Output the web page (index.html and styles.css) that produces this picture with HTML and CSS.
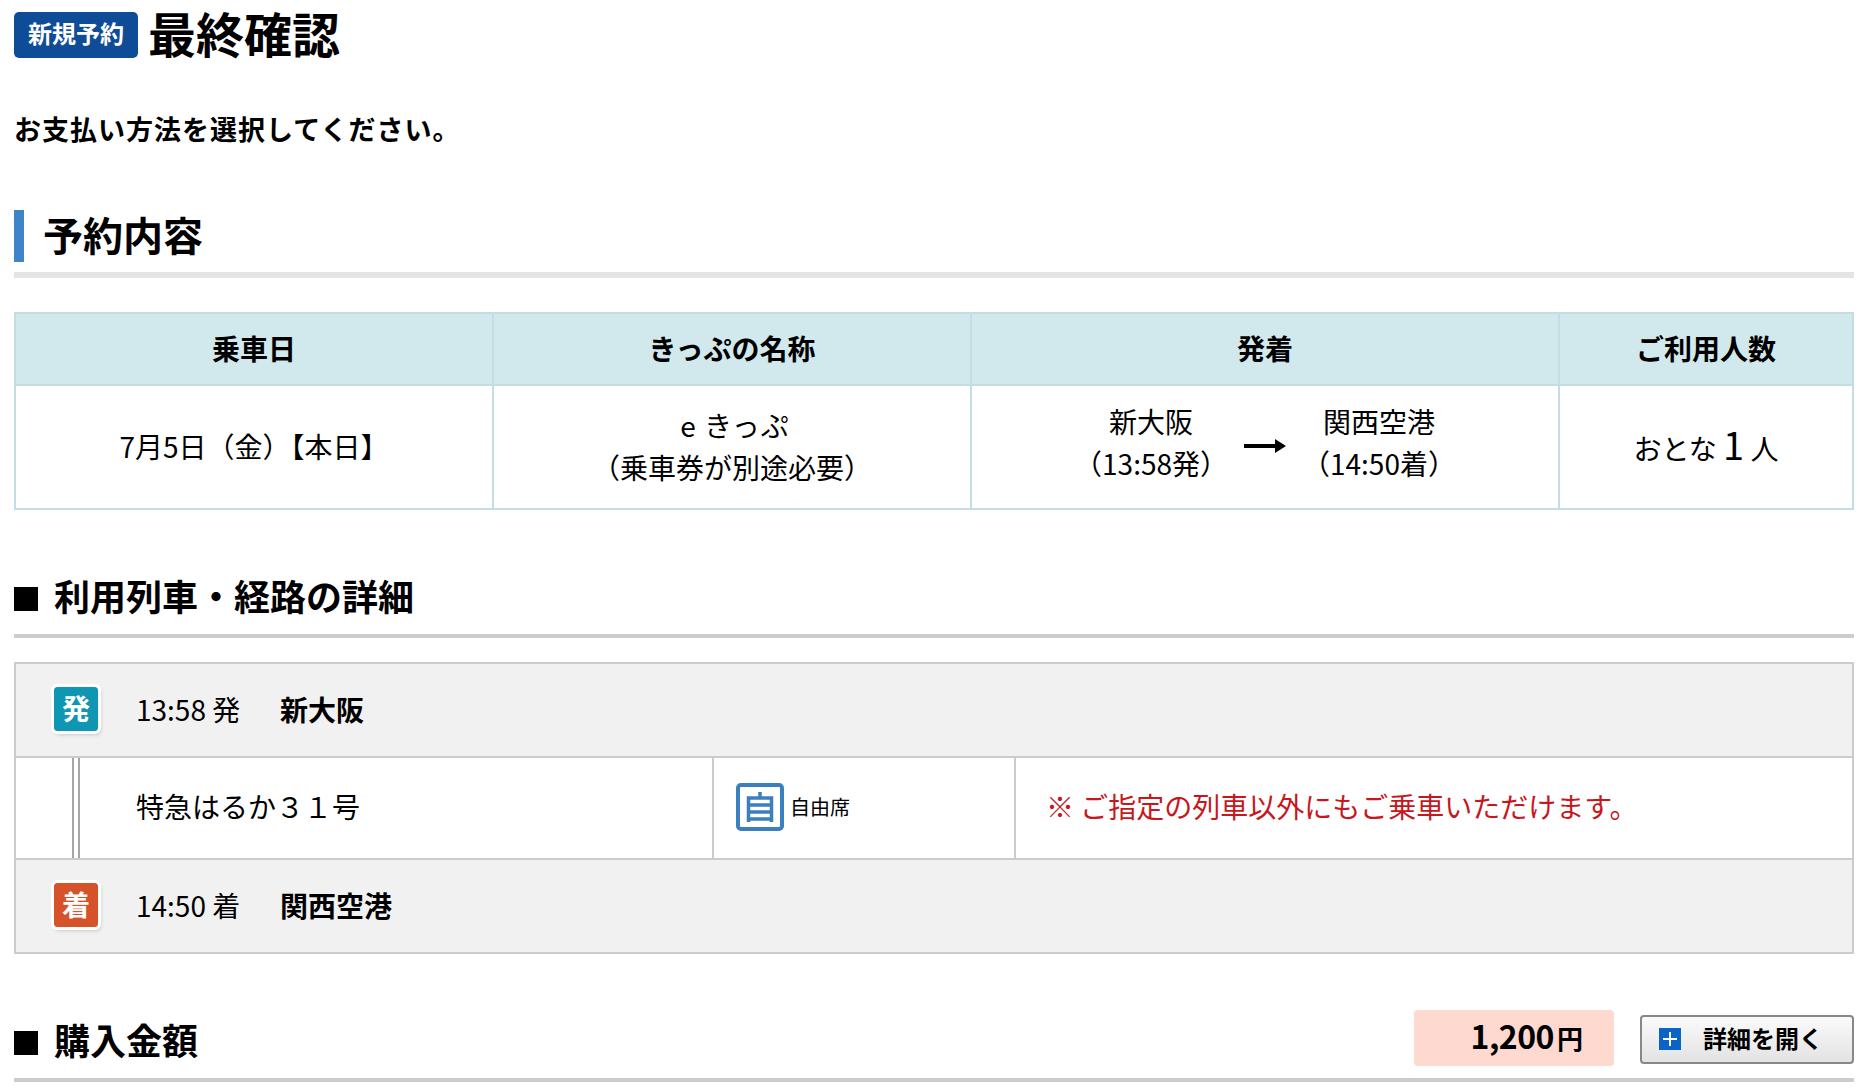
FILE: index.html
```html
<!DOCTYPE html>
<html lang="ja">
  <head>
    <meta charset="UTF-8" />
    <meta name="viewport" content="width=device-width, initial-scale=1.0" />
    <title>最終確認</title>
    <link rel="stylesheet" href="styles.css">
  </head>
  <body>
    <div class="page-title">
      <span class="badge">新規予約</span>
      <h1>最終確認</h1>
    </div>
    <p class="lead">お支払い方法を選択してください。</p>

    <h2 class="section-main">予約内容</h2>
    <table class="summary">
      <tr>
        <th class="col-date">乗車日</th>
        <th class="col-name">きっぷの名称</th>
        <th class="col-route">発着</th>
        <th>ご利用人数</th>
      </tr>
      <tr>
        <td>7月5日（金）【本日】</td>
        <td><span class="ticket-name">e きっぷ</span><br />（乗車券が別途必要）</td>
        <td>
          <div class="route">
            <div class="stop">新大阪<br />（13:58発）</div>
            <svg class="route-arrow" width="42" height="16" viewBox="0 0 42 16">
              <path d="M0 6h31V1l11 7-11 7v-5H0z" fill="#000" />
            </svg>
            <div class="stop">関西空港<br />（14:50着）</div>
          </div>
        </td>
        <td>おとな <span class="count">1</span> 人</td>
      </tr>
    </table>

    <h2 class="section-sub">利用列車・経路の詳細</h2>
    <div class="train-box">
      <div class="stop-row">
        <span class="mark mark-dep">発</span>
        <span class="time">13:58 発</span>
        <strong>新大阪</strong>
      </div>
      <div class="train-row">
        <div class="train-name">特急はるか３１号</div>
        <div class="seat">
          <svg width="48" height="48" viewBox="0 0 48 48">
            <rect x="2" y="2" width="44" height="44" rx="3" fill="#fff" stroke="#3b7fc0" stroke-width="4" />
            <path d="M24 9v6M12.500 15h23v21h-23zM12.500 22h23M12.500 29h23M12.500 36v3M35.500 36v3" fill="none" stroke="#3b7fc0" stroke-width="3.500" />
          </svg>
          <span>自由席</span>
        </div>
        <div class="train-note">※ ご指定の列車以外にもご乗車いただけます。</div>
      </div>
      <div class="stop-row">
        <span class="mark mark-arr">着</span>
        <span class="time">14:50 着</span>
        <strong>関西空港</strong>
      </div>
    </div>

    <div class="price-head">
      <h2 class="price-title">購入金額</h2>
      <div class="price"><b>1,200</b><span>円</span></div>
      <button class="detail-btn"><i class="plus"></i><span>詳細を開く</span></button>
    </div>
  </body>
</html>
```

FILE: styles.css
```css
* {
  margin: 0;
  padding: 0;
  box-sizing: border-box;
}

body {
  font-family: "Noto Sans CJK JP", sans-serif;
  padding: 0 12px 0 14px;
  background: #fff;
  color: #000;
}

.page-title {
  display: flex;
  align-items: center;
  height: 70px;
}

.badge {
  width: 124px;
  height: 46px;
  margin-right: 10px;
  background: #0f4c97;
  color: #fff;
  border-radius: 5px;
  font-size: 24px;
  font-weight: bold;
  line-height: 42px;
  text-align: center;
}

h1 {
  font-size: 48px;
  font-weight: bold;
  line-height: 66px;
  margin-bottom: 6px;
}

.lead {
  margin-top: 41px;
  font-size: 27px;
  font-weight: bold;
  line-height: 36px;
  letter-spacing: 1px;
}

.section-main {
  margin-top: 63px;
  padding: 0 0 10px 0;
  border-bottom: 6px solid #e4e4e4;
  font-size: 40px;
  line-height: 48px;
}

.section-main::before {
  content: "";
  display: inline-block;
  width: 10px;
  height: 52px;
  margin-right: 19px;
  vertical-align: top;
  background: #3f83c8;
}

.summary {
  width: 100%;
  margin-top: 34px;
  border-collapse: collapse;
  table-layout: fixed;
  font-size: 28px;
}

.summary th,
.summary td {
  border: 2px solid #c3dde3;
  text-align: center;
  font-weight: normal;
}

.summary th {
  height: 72px;
  padding-bottom: 2px;
  background: #d1e8ed;
  font-weight: bold;
}

.summary td {
  height: 124px;
  line-height: 42px;
  padding-bottom: 2px;
}

.col-date,
.col-name {
  width: 478px;
}

.col-route {
  width: 588px;
}

.ticket-name {
  margin-left: 6px;
  letter-spacing: 1px;
}

.route {
  display: flex;
  align-items: center;
  justify-content: center;
  gap: 16px;
  padding-bottom: 8px;
}

.route-arrow {
  margin-top: 8px;
}

.count {
  font-size: 38px;
}

.section-sub {
  margin-top: 60px;
  padding-bottom: 14px;
  border-bottom: 4px solid #ccc;
  font-size: 36px;
  line-height: 50px;
}

.section-sub::before,
.price-title::before {
  content: "";
  display: inline-block;
  width: 24px;
  height: 24px;
  margin-right: 16px;
  background: #000;
}

.train-box {
  margin-top: 24px;
  border: 2px solid #ccc;
  font-size: 28px;
}

.stop-row {
  display: flex;
  align-items: center;
  height: 92px;
  padding-left: 38px;
  padding-bottom: 2px;
  background: #f1f1f1;
}

.mark {
  width: 44px;
  height: 44px;
  margin-right: 38px;
  border-radius: 3px;
  outline: 3px solid #fff;
  box-shadow: 2px 3px 4px rgba(0, 0, 0, 0.25);
  color: #fff;
  font-size: 28px;
  font-weight: bold;
  line-height: 42px;
  text-align: center;
}

.mark-dep {
  background: #0e96b3;
}

.mark-arr {
  background: #d6532a;
}

.time {
  width: 144px;
}

.train-row {
  display: flex;
  align-items: stretch;
  height: 104px;
  border-top: 2px solid #ccc;
  border-bottom: 2px solid #ccc;
  background: #fff;
}

/* the double line between 発 and 着 */
.train-name {
  display: flex;
  align-items: center;
  width: 640px;
  padding-left: 62px;
  padding-bottom: 5px;
  margin-left: 56px;
  border-left: 2px solid #a6a6a6;
  box-shadow: inset 4px 0 0 #fff, inset 6px 0 0 #a6a6a6;
}

.seat {
  display: flex;
  align-items: center;
  gap: 6px;
  width: 304px;
  padding-left: 22px;
  padding-bottom: 3px;
  border-left: 2px solid #ccc;
  border-right: 2px solid #ccc;
  font-size: 20px;
}

.train-note {
  display: flex;
  align-items: center;
  padding-left: 30px;
  padding-bottom: 5px;
  color: #c8161d;
}

.price-head {
  display: flex;
  align-items: center;
  margin-top: 56px;
  padding-bottom: 12px;
  border-bottom: 4px solid #ccc;
}

.price-title {
  flex: 1;
  margin-top: 2px;
  font-size: 36px;
  line-height: 52px;
}

.price {
  width: 200px;
  height: 56px;
  margin-right: 26px;
  padding-right: 31px;
  border-radius: 4px;
  background: #fdd9cf;
  line-height: 51px;
  text-align: right;
}

.price b {
  font-size: 32px;
  letter-spacing: -0.5px;
}

.price span {
  margin-left: 3px;
  font-size: 26px;
  font-weight: bold;
}

.detail-btn {
  display: flex;
  align-items: center;
  width: 214px;
  height: 49px;
  margin-top: 2px;
  padding-left: 17px;
  border: 2px solid #888;
  border-radius: 4px;
  background: linear-gradient(#fafafa, #e3e3e3);
  color: #000;
  font-family: inherit;
  font-size: 24px;
  font-weight: bold;
}

.detail-btn span {
  margin-bottom: 3px;
}

.plus {
  position: relative;
  width: 22px;
  height: 22px;
  margin-right: 22px;
  background: #0a63c7;
}

.plus::before,
.plus::after {
  content: "";
  position: absolute;
  background: #fff;
}

.plus::before {
  left: 4px;
  top: 10px;
  width: 14px;
  height: 2px;
}

.plus::after {
  left: 10px;
  top: 4px;
  width: 2px;
  height: 14px;
}
```
